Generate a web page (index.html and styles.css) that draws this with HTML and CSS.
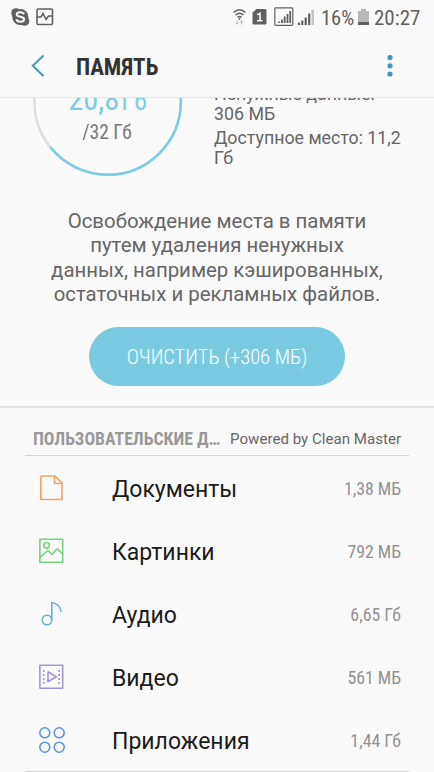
FILE: index.html
```html
<!DOCTYPE html>
<html lang="ru">
<head>
<meta charset="utf-8">
<title>Память</title>
<link rel="stylesheet" href="styles.css">
</head>
<body>
<div class="statusbar">
  <svg class="notices" width="36" height="36" viewBox="0 0 36 36">
    <g fill="#606060"><circle cx="16" cy="13" r="4.800"/><circle cx="24.500" cy="21" r="4.800"/><circle cx="20.300" cy="17" r="8"/></g>
    <path d="M24 14.200c-.6-1.600-2-2-3.800-2-2 0-3.500.8-3.500 2.300 0 3.200 7.400 1.500 7.400 4.700 0 1.700-1.700 2.500-3.800 2.500s-3.600-.9-4-2.500" fill="none" stroke="#fafafa" stroke-width="2"/>
  </svg>
  <svg class="monitor" width="18" height="18" viewBox="0 0 18 18" fill="none" stroke="#606060" stroke-width="1.600"><rect x="1" y="1" width="15.500" height="15.500" rx="1"/><path d="M1 9h4l2-3.500 3 6L12.500 8h4"/></svg>
  <svg class="signals" width="84" height="36" viewBox="0 0 84 36">
    <g fill="none" stroke="#606060" stroke-width="1.500"><path d="M1.500 12.500q6-5.500 12 0M3.500 15q4-3.600 8 0M5.500 17.300q2-1.700 4 0"/></g>
    <circle cx="7.500" cy="18.700" r="1" fill="#606060"/>
    <path d="M5 20.500V24M3.600 22.800 5 24.200l1.400-1.400M9.500 24.500V21M8.100 22.200l1.400-1.400 1.400 1.400" fill="none" stroke="#b5b5b5"/>
    <path d="M24.500 9H33q1.500 0 1.500 1.500V23q0 1.500-1.500 1.500H22q-1.500 0-1.500-1.500V12.500z" fill="#606060"/>
    <path d="M25.300 14.800 28 13.300V21M25 20.700h5.500" fill="none" stroke="#fafafa" stroke-width="1.600"/>
    <rect x="42.800" y="7.800" width="18" height="17.500" rx="1" fill="none" stroke="#606060" stroke-width="1.200"/>
    <path d="M47.200 23v-1.500M50 23v-3.500M52.700 23v-6.500M55.500 23v-9M58.200 23V11" stroke="#606060" stroke-width="1.800"/>
    <path d="M67 25v-2.500M70.300 25v-4.500M73.700 25v-7.500M77.200 25V13.500" stroke="#606060" stroke-width="2.200"/>
    <path d="M80.700 25V9.500" stroke="#c4c4c4" stroke-width="2.400"/>
  </svg>
  <span class="percent condensed">16%</span>
  <svg class="battery" width="11" height="18" viewBox="0 0 11 18"><path d="M3 1h5v2h3v14H0V3h3z" fill="#b8b8b8"/><path d="M0 14h11v3H0z" fill="#606060"/></svg>
  <span class="clock condensed">20:27</span>
</div>
<header class="appbar">
  <svg width="14" height="24" viewBox="0 0 14 24"><path d="M12.500 1.500 1.700 11.800l10.800 10.200" fill="none" stroke="#4598b8" stroke-width="2"/></svg>
  <h1 class="condensed">ПАМЯТЬ</h1>
  <svg class="more" width="6" height="24" viewBox="0 0 6 24" fill="#4598b8"><circle cx="3" cy="3.500" r="2.600"/><circle cx="3" cy="11.800" r="2.600"/><circle cx="3" cy="20" r="2.600"/></svg>
</header>
<main>
  <section class="summary">
    <div class="gauge">
      <svg width="150" height="150" viewBox="0 0 150 150" fill="none" stroke-width="2.500"><circle cx="74.600" cy="75.500" r="73.200" stroke="#dedede"/><circle cx="74.600" cy="75.500" r="73.200" stroke="#7acce3" pathLength="100" stroke-dasharray="64.300 100" transform="rotate(-90 74.600 75.500)"/></svg>
      <div class="amount">
        <div class="used condensed">20,8<small>Гб</small></div>
        <div class="total condensed">/32 Гб</div>
      </div>
    </div>
    <div class="facts"><p>Ненужные данные:<br>306 МБ</p><p>Доступное место: 11,2<br>Гб</p></div>
  </section>
  <p class="hint">Освобождение места в памяти<br>путем удаления ненужных<br>данных, например кэшированных,<br>остаточных и рекламных файлов.</p>
  <button class="clean"><span class="condensed">ОЧИСТИТЬ (+306 МБ)</span></button>
  <section class="userdata">
    <div class="heading"><h2 class="condensed">ПОЛЬЗОВАТЕЛЬСКИЕ Д…</h2><span>Powered by Clean Master</span></div>
    <ul>
      <li><svg width="28" height="28" viewBox="0 0 28 28" fill="none" stroke="#f0a264" stroke-width="1.600"><path d="M3.500 2h13.500l7 7v16.500H2.800V2.700zM16.500 2v7.500H24" stroke-linejoin="round"/></svg><span class="name">Документы</span><span class="size condensed">1,38 МБ</span></li>
      <li><svg width="28" height="28" viewBox="0 0 28 28" fill="none" stroke="#73d27c" stroke-width="1.600"><path d="M1.900 2.300h22.800v23H1.900z"/><circle cx="8.600" cy="8.300" r="2.800"/><path d="m2 20.500 7.800-7L14 17.300l5.200-5.500 5.500 5"/></svg><span class="name">Картинки</span><span class="size condensed">792 МБ</span></li>
      <li><svg width="28" height="28" viewBox="0 0 28 28" fill="none" stroke="#69afe0" stroke-width="1.600"><circle cx="9" cy="20" r="4.800"/><path d="M13.800 20V2.500c4.600.2 9.200 4.500 9.300 9.500"/></svg><span class="name">Аудио</span><span class="size condensed">6,65 Гб</span></li>
      <li><svg width="28" height="28" viewBox="0 0 28 28" fill="none" stroke="#a294dc" stroke-width="1.600"><path d="M1.900 2.300h22.800v23H1.900zM10 8.800v10l8.300-5z" stroke-linejoin="round"/><path d="M5.700 7v14M21.200 7v14" stroke-dasharray="2 2"/></svg><span class="name">Видео</span><span class="size condensed">561 МБ</span></li>
      <li><svg width="28" height="28" viewBox="0 0 28 28" fill="none" stroke="#5c96e5" stroke-width="1.600"><circle cx="6.800" cy="6.800" r="5"/><circle cx="21.200" cy="6.800" r="5"/><circle cx="6.800" cy="21.200" r="5"/><circle cx="21.200" cy="21.200" r="5"/></svg><span class="name">Приложения</span><span class="size condensed">1,44 Гб</span></li>
    </ul>
  </section>
</main>
</body>
</html>
```
FILE: styles.css
```css
* { box-sizing: border-box; margin: 0; padding: 0; }
body { width: 434px; height: 772px; overflow: hidden; background: #fafafa; color: #666; font-family: Roboto, sans-serif; display: flex; flex-direction: column; }
svg { display: block; flex: none; }
.condensed { font-family: "Roboto Condensed", Roboto, sans-serif; font-stretch: 75%; white-space: nowrap; }
.statusbar { height: 36px; flex: none; display: flex; color: #606060; }
.monitor { margin-top: 8px; }
.signals { margin-left: 178px; }
.percent { margin-left: 5px; width: 34px; font-size: 20.500px; line-height: 36px; }
.battery { margin: 8px 5px 0 3px; }
.clock { font-size: 21px; line-height: 36px; }
.appbar { height: 62px; flex: none; border-bottom: 1px solid #e4e4e4; display: flex; align-items: center; padding: 0 41px 2px 31px; }
h1 { margin-left: 31px; padding-top: 3px; font-size: 23px; font-weight: 700; color: #333; }
.more { margin-left: auto; }
main { flex: 1; min-height: 0; overflow: hidden; }
.summary { display: flex; height: 150px; margin-top: -72px; padding-left: 33px; }
.gauge { display: grid; width: 150px; }
.gauge > * { grid-area: 1 / 1; }
.amount { text-align: center; padding-top: 56px; }
.used { color: #7acce3; font-size: 30.500px; line-height: 36px; }
.used small { font-size: 26px; margin-left: 2px; letter-spacing: 1px; }
.total { font-size: 19.500px; line-height: 24px; color: #777; margin: 2px 2px 0 0; }
.facts { margin-left: 31px; padding-top: 58px; font-size: 17.800px; line-height: 20px; }
.facts p + p { margin-top: 4px; }
.hint { margin-top: 33px; text-align: center; font-size: 20.400px; line-height: 24.300px; }
.clean { display: block; width: 256px; height: 59px; margin: 21px 0 0 89px; border: 0; border-radius: 30px; background: #7acbe2; color: #fff; font-size: 20.500px; font-weight: 300; }
.userdata { margin-top: 20px; border-top: 2px solid #e3e3e3; padding: 0 25px; }
.heading { height: 48px; border-bottom: 1px solid #d6d6d6; display: flex; align-items: center; padding: 14px 8px 0; justify-content: space-between; font-size: 15.100px; }
h2 { font-size: 17.700px; font-weight: 700; color: #999; }
ul { list-style: none; height: 316px; border-bottom: 1px solid #d6d6d6; }
li { height: 63px; display: flex; align-items: center; padding: 0 8px 0 13px; }
.name { margin-left: 46px; font-size: 23px; color: #1b1b1b; padding-top: 3px; }
.size { margin-left: auto; font-size: 17.800px; color: #929292; padding-top: 1px; }
```
